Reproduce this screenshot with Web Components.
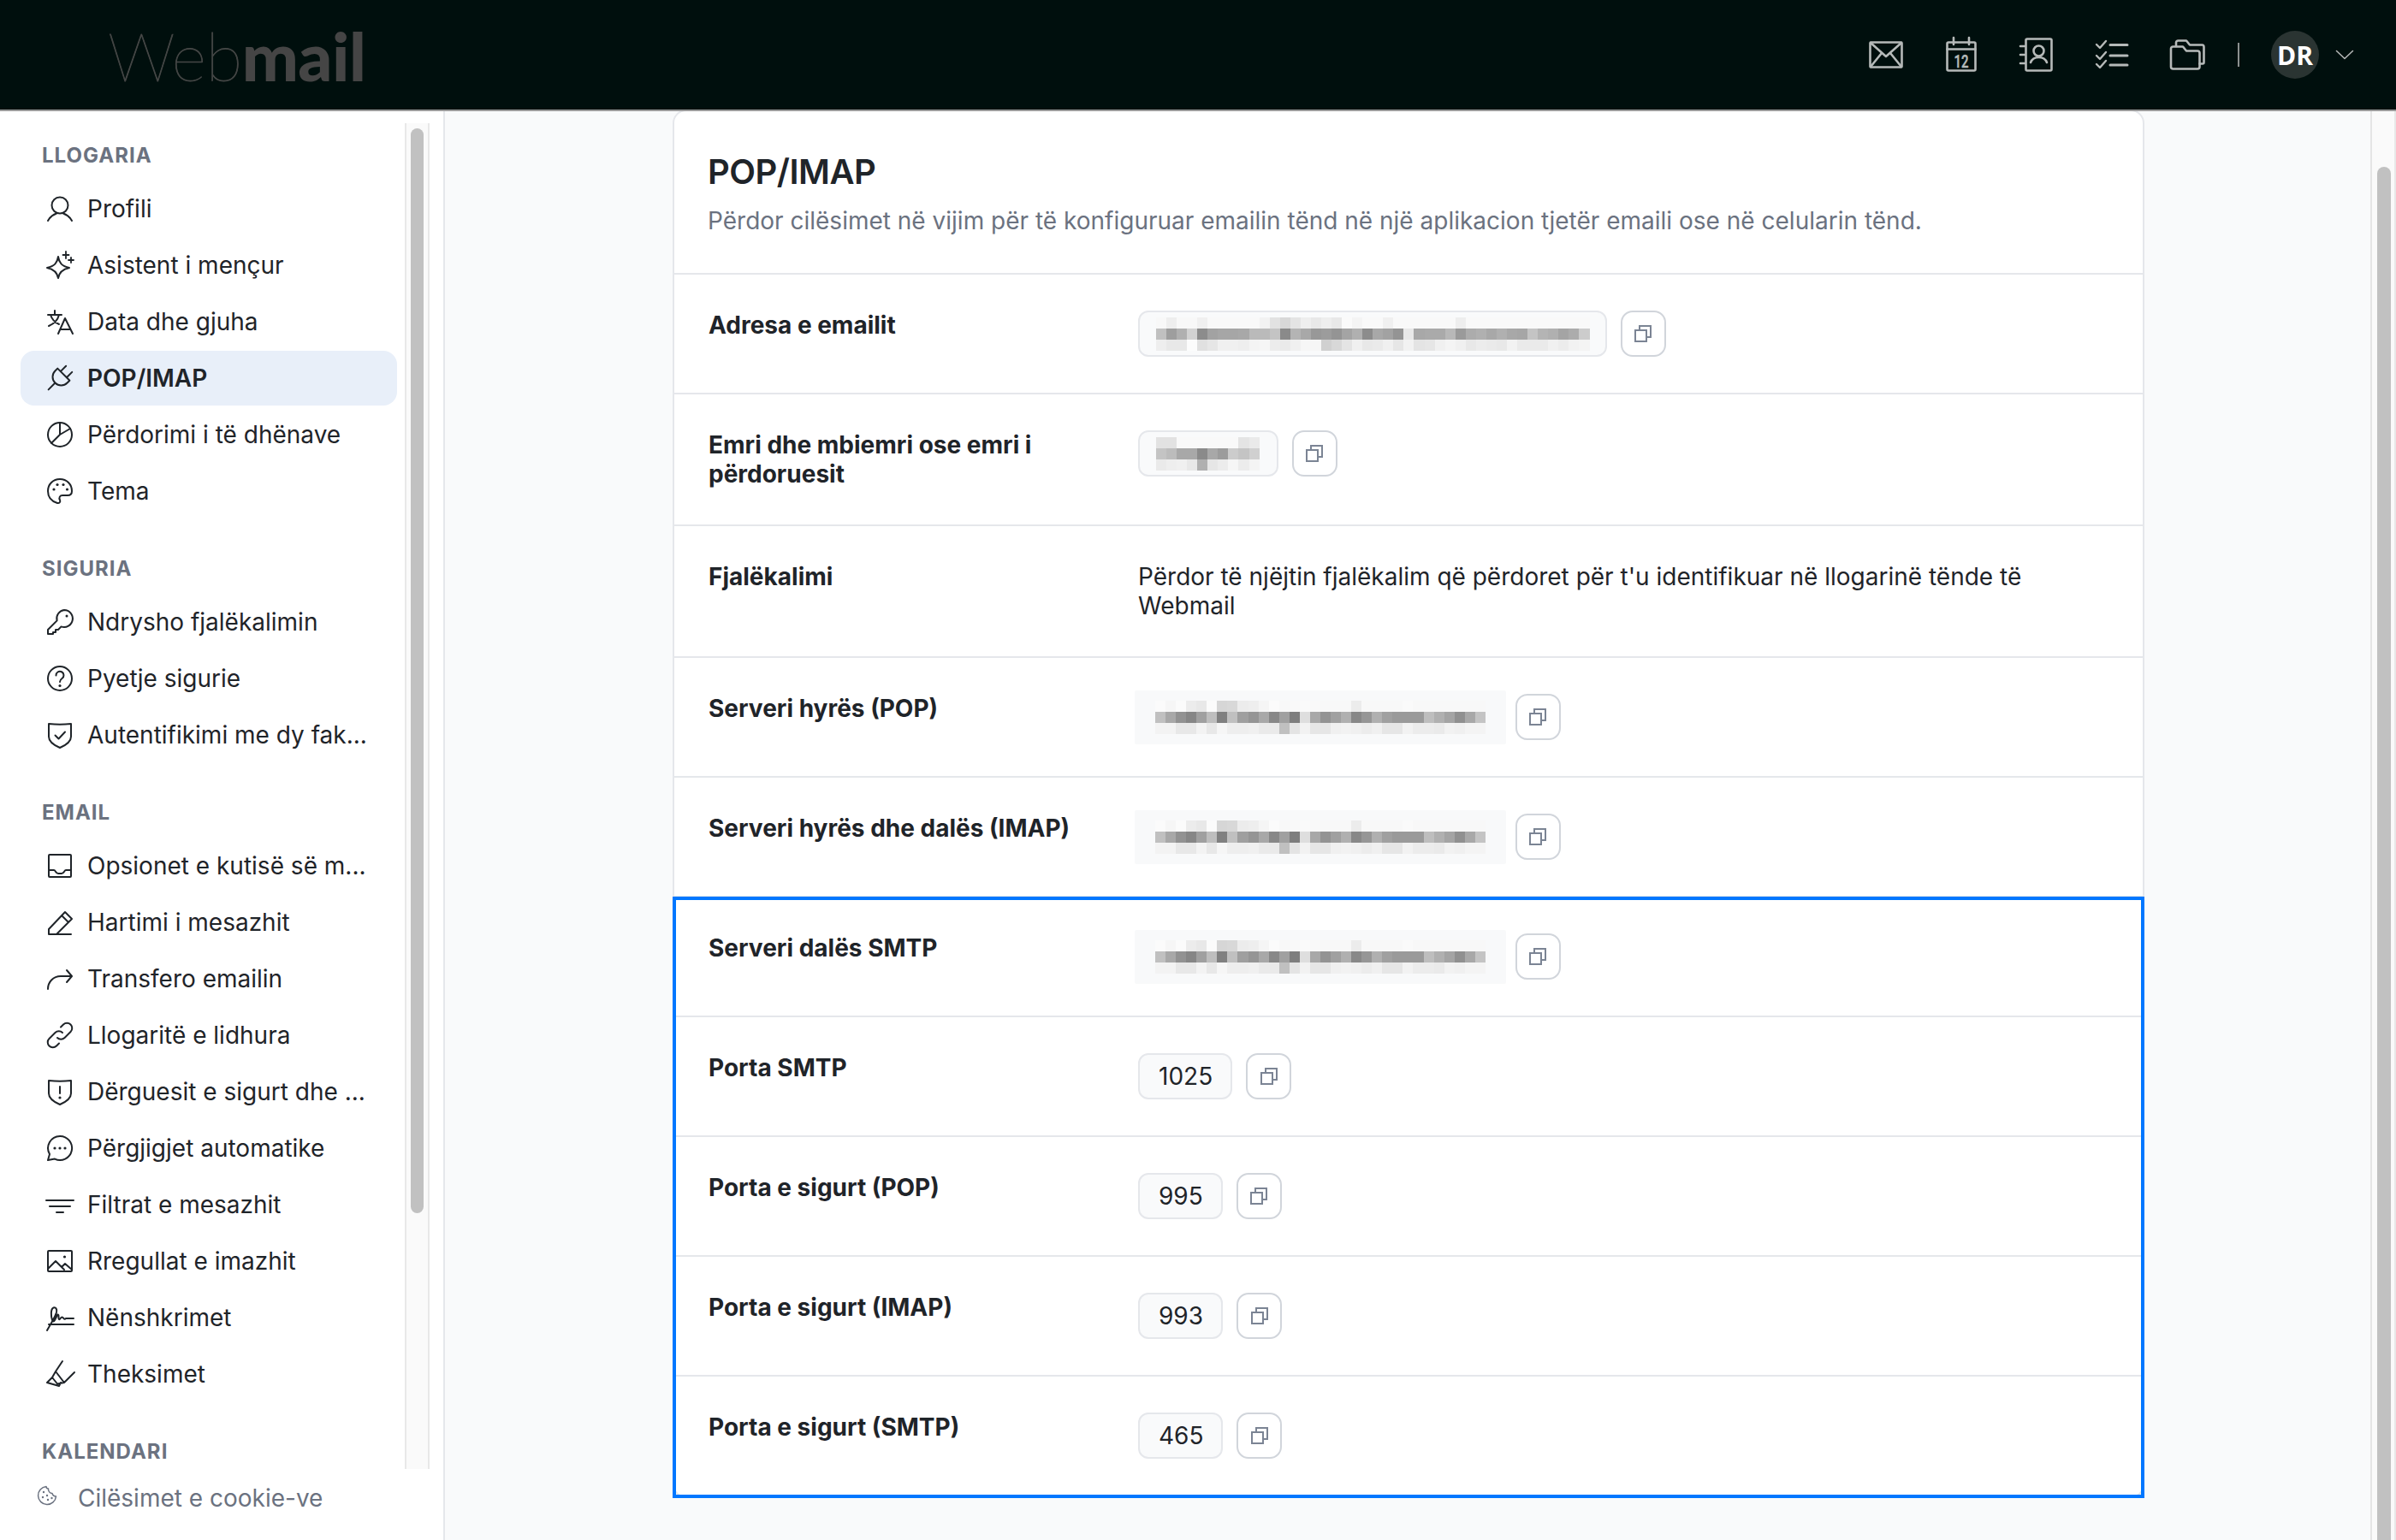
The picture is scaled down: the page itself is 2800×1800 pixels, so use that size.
<!DOCTYPE html>
<html lang="sq">
<head>
<meta charset="utf-8">
<title>Webmail</title>
<style>
  html, body { margin: 0; height: 100%; }
  body {
    width: 2800px;
    height: 1800px;
    overflow: hidden;
    display: flex;
    flex-direction: column;
    font-family: Inter, "Liberation Sans", sans-serif;
    font-size: 28px;
    color: #1f2429;
    background: #f9fafb;
  }
  .page { flex: 1; display: flex; min-height: 0; }
</style>
</head>
<body>
<web-header></web-header>
<div class="page">
  <side-bar>
    <nav-group title="LLOGARIA">
      <nav-item icon="user">Profili</nav-item>
      <nav-item icon="sparkle">Asistent i mençur</nav-item>
      <nav-item icon="translate">Data dhe gjuha</nav-item>
      <nav-item icon="plug" active>POP/IMAP</nav-item>
      <nav-item icon="pie">Përdorimi i të dhënave</nav-item>
      <nav-item icon="palette">Tema</nav-item>
    </nav-group>
    <nav-group title="SIGURIA">
      <nav-item icon="key">Ndrysho fjalëkalimin</nav-item>
      <nav-item icon="question">Pyetje sigurie</nav-item>
      <nav-item icon="shieldcheck">Autentifikimi me dy fak...</nav-item>
    </nav-group>
    <nav-group title="EMAIL">
      <nav-item icon="inbox">Opsionet e kutisë së m...</nav-item>
      <nav-item icon="pencil">Hartimi i mesazhit</nav-item>
      <nav-item icon="forward">Transfero emailin</nav-item>
      <nav-item icon="link">Llogaritë e lidhura</nav-item>
      <nav-item icon="shieldalert">Dërguesit e sigurt dhe ...</nav-item>
      <nav-item icon="chat">Përgjigjet automatike</nav-item>
      <nav-item icon="filter">Filtrat e mesazhit</nav-item>
      <nav-item icon="image">Rregullat e imazhit</nav-item>
      <nav-item icon="signature">Nënshkrimet</nav-item>
      <nav-item icon="highlight">Theksimet</nav-item>
    </nav-group>
    <nav-group title="KALENDARI"></nav-group>
  </side-bar>
  <main-area>
    <settings-card heading="POP/IMAP" description="Përdor cilësimet në vijim për të konfiguruar emailin tënd në një aplikacion tjetër emaili ose në celularin tënd.">
      <setting-row label="Adresa e emailit"><blur-mosaic kind="email"></blur-mosaic><copy-button></copy-button></setting-row>
      <setting-row label="Emri dhe mbiemri ose emri i përdoruesit"><blur-mosaic kind="name"></blur-mosaic><copy-button></copy-button></setting-row>
      <setting-row label="Fjalëkalimi"><span>Përdor të njëjtin fjalëkalim që përdoret për t'u identifikuar në llogarinë tënde të Webmail</span></setting-row>
      <setting-row label="Serveri hyrës (POP)"><blur-mosaic kind="server"></blur-mosaic><copy-button></copy-button></setting-row>
      <setting-row label="Serveri hyrës dhe dalës (IMAP)"><blur-mosaic kind="server"></blur-mosaic><copy-button></copy-button></setting-row>
      <highlight-box>
        <setting-row label="Serveri dalës SMTP"><blur-mosaic kind="server"></blur-mosaic><copy-button></copy-button></setting-row>
        <setting-row label="Porta SMTP"><value-chip>1025</value-chip><copy-button></copy-button></setting-row>
        <setting-row label="Porta e sigurt (POP)"><value-chip>995</value-chip><copy-button></copy-button></setting-row>
        <setting-row label="Porta e sigurt (IMAP)"><value-chip>993</value-chip><copy-button></copy-button></setting-row>
        <setting-row label="Porta e sigurt (SMTP)"><value-chip>465</value-chip><copy-button></copy-button></setting-row>
      </highlight-box>
    </settings-card>
  </main-area>
</div>

<script>
const ICONS = {
  user: '<circle cx="16" cy="12" r="9.5"/><path d="M2 30C4.5 25.5 8.5 22.8 12 21.5M30 30C27.5 25.5 23.5 22.8 20 21.5"/>',
  sparkle: '<path d="M14 6C15 13 18 17 27 19C18 21 15 25 14 31C13 25 10 21 1 19C10 17 13 13 14 6Z"/><path d="M23 0V8M19.5 4H26.5M29 7V13M26 10H32" stroke-width="1.8"/>',
  translate: '<path d="M2 8H18M10 3V8M15 8C13.5 14 9 18.5 3 21M5 8C7 14 10 17 15 19M14 30L22 12L31 30M17 25H28"/>',
  plug: '<g transform="translate(17.5 14.5) rotate(45)"><path d="M-10 -4H10V0A10 10 0 0 1 -10 0ZM-5 -4V-13M5 -4V-13M0 10V21"/></g>',
  pie: '<circle cx="16" cy="16" r="14"/><path d="M16 2V16L28 9M16 16L6 26"/>',
  palette: '<path d="M16 2C8 2 2 8 2 16C2 23 6.500 28 13 30C15.500 30.500 17 28.500 16 26.500C14.500 23.500 16 21 19 21H25C28.500 21 30 19 30 16C30 8 24 2 16 2Z"/><g fill="currentColor" stroke="none"><circle cx="9" cy="14" r="1.600"/><circle cx="13" cy="8.500" r="1.600"/><circle cx="20" cy="8.500" r="1.600"/><circle cx="24.500" cy="14" r="1.600"/></g>',
  key: '<path d="M21 2A10 10 0 1 1 17.500 21.400L14 25H11V28H8V30H2V25L12.600 14.400A10 10 0 0 1 21 2Z"/><circle cx="24" cy="9" r="1.500" fill="currentColor" stroke="none"/>',
  question: '<circle cx="16" cy="16" r="14"/><path d="M11.500 12.500A4.500 4.500 0 1 1 18.500 16C17 17 16 18 16 20"/><circle cx="16" cy="24.500" r="1.600" fill="currentColor" stroke="none"/>',
  shieldcheck: '<path d="M3 3C11 3.800 21 3.800 29 3V18C29 23.500 23 28 16 31C9 28 3 23.500 3 18Z"/><path d="M10.500 16.500L14.500 20.500L22 12.500"/>',
  inbox: '<rect x="3" y="3" width="26" height="26" rx="1"/><path d="M3 21H9C11 21 11 25 14 25H18C21 25 21 21 23 21H29"/>',
  pencil: '<path d="M3 30V24L22 4L30 12L12 30H3ZM18 8L26 16M12 30H29"/>',
  forward: '<path d="M2 28C2 20 8 13 17 13H30M24 6L30 13L24 20"/>',
  link: '<path d="M13 19A6 6 0 0 0 21.500 19L28.500 12A6 6 0 0 0 20 3.500L17 6.500M19 13A6 6 0 0 0 10.500 13L3.500 20A6 6 0 0 0 12 28.500L15 25.500"/>',
  shieldalert: '<path d="M3 3C11 3.800 21 3.800 29 3V18C29 23.500 23 28 16 31C9 28 3 23.500 3 18Z"/><path d="M16 10V18"/><circle cx="16" cy="23" r="1.600" fill="currentColor" stroke="none"/>',
  chat: '<path d="M16 2A14 14 0 1 1 10 28.600L2 30L4 23A14 14 0 0 1 16 2Z"/><g fill="currentColor" stroke="none"><circle cx="10" cy="16" r="1.600"/><circle cx="16" cy="16" r="1.600"/><circle cx="22" cy="16" r="1.600"/></g>',
  filter: '<path d="M0 11H32M4 18H28M12 25H20"/>',
  image: '<rect x="2" y="4" width="28" height="24" rx="1"/><path d="M2 25L11 16L21 26M18 23L22 19L30 26"/><circle cx="21.500" cy="11" r="1.600" fill="currentColor" stroke="none"/>',
  signature: '<path d="M1 31C5 24 10 16 12 10C13 6 11 3.500 8.500 4.500C5 6 5.500 14 7 19C7.500 21 9 21 10 19L13 13C13.500 12 14.500 12.500 14.500 14V17C15 19 16 18 17 16.500C18 15 19 15 20 16.500C21 18 22 18 23 17H32M3 24H32"/>',
  highlight: '<path d="M19 1L11 13L21 26L33 14M11 13L7 20L13 27.500L21 26M7 20L1 26L15 30L17 26"/>',
};

const HEADER_ICONS = {
  mail: '<svg width="40" height="32" viewBox="0 0 40 32"><rect x="1.500" y="1.500" width="37" height="29" rx="1"/><path d="M2 2L20 18L38 2M2 30L15 14M38 30L25 14"/></svg>',
  calendar: '<svg width="36" height="40" viewBox="0 0 36 40"><rect x="1.500" y="5.500" width="33" height="33" rx="1.500"/><path d="M1.500 13.500H34.500M9 0V8M27 0V8"/><text x="18" y="35" text-anchor="middle" font-family="Roboto, sans-serif" font-size="21" font-weight="500" fill="currentColor" stroke="currentColor" stroke-width="0.500" textLength="17" lengthAdjust="spacingAndGlyphs">12</text></svg>',
  contacts: '<svg width="38" height="40" viewBox="0 0 38 40"><rect x="6.500" y="1.500" width="30" height="37" rx="1.500"/><path d="M0 10H5M0 20H5M0 30H5"/><circle cx="21.500" cy="15.500" r="6"/><path d="M12 29C13.500 25 17 23 21.500 23S29.500 25 31 29"/></svg>',
  tasks: '<svg width="36" height="34" viewBox="0 0 36 34"><path d="M0 5L4 9L11 1M0 18L4 22L11 14M0 28L4 32L11 24" stroke-width="2.400"/><path d="M16 5.500H36M16 18H36M16 29H36" stroke-width="3"/></svg>',
  folder: '<svg width="42" height="36" viewBox="0 0 42 36"><path d="M2 11V32C2 33.500 3 34.500 4.500 34.500H33C34.500 34.500 35.500 33.500 35.500 32V16C35.500 14.500 34.500 13.500 33 13.500H20L16 8.500H4.500C3 8.500 2 9.500 2 11Z"/><path d="M8 8V4C8 2.500 9 1.500 10.500 1.500H20L24 6.500H38.500C40 6.500 40.500 7.500 40.500 9V27C40.500 28 40 28.500 39 28.500H35.500"/></svg>',
};

const MOSAICS = {
  email: {
    padRight: 18,
    rows: [
      'f8 ee f8 f8 f0 f9 f9 f9 f9 f9 f2 e2 d8 e4 ee e8 ee e8 fa f4 f9 f9 f0 f9 f9 f9 f9 f9 f9 ee f9 f9 f9 f9 f9 f9 f9 f9 f9 f9 f9 f9',
      'c0 9e b0 d2 8c a2 a6 a6 a8 ba ba c4 8a b4 a8 98 9c 94 a4 b0 8c a8 a2 94 e8 a8 aa aa b8 9a ac b0 a8 b0 a8 a6 c4 b4 b0 a4 ac cc',
      'ee e8 e8 fc e0 e6 f0 f0 ee f4 f6 ec ea f0 f6 f6 d0 d8 e4 f0 e8 ea f0 e6 f2 e4 e6 f0 f4 f0 e8 ec ea e8 f2 ea ea ea f0 ec f2 f4',
    ],
  },
  name: {
    padRight: 20,
    rows: [
      'e2 e2 f9 f9 f9 f9 f9 f9 e4 ea',
      'c4 bc a8 a8 8a a8 9c cc c4 d0',
      'ea ee f0 e8 b0 e6 ec f6 ec f4',
    ],
  },
  server: {
    bare: true,
    rows: [
      'fb f6 fb ec e8 fb d6 d8 ec ee f5 fb f8 f9 fa f9 f8 f8 f8 ec f8 f8 f8 f8 fa f8 f8 f8 f8 f8 f8 f8',
      'c0 a8 92 86 a0 be 80 c0 9f 95 a8 88 a0 7e de a8 93 a0 b0 88 96 b0 a0 9a 9a 9a be b0 a4 90 a8 c4',
      'f3 f3 e8 e8 f3 e8 f6 ee ee f0 ea ea c0 e4 f2 e6 e6 f0 f2 f0 ec f0 e6 e6 f2 ec ec ea f2 f0 f4 f4',
    ],
  },
};

class SvgIcon extends HTMLElement {
  constructor() {
    super();
    const shadowRoot = this.attachShadow({ mode: 'open' });
    const size = this.getAttribute('size') || 32;
    shadowRoot.innerHTML = `
      <style>
        :host { display: block; width: ${size}px; height: ${size}px; flex: none; }
        svg { display: block; overflow: visible; fill: none; stroke: currentColor; stroke-width: 2; stroke-linecap: round; stroke-linejoin: round; }
      </style>
      <svg width="${size}" height="${size}" viewBox="0 0 32 32">${ICONS[this.getAttribute('name')] || ''}</svg>`;
  }
}
customElements.define('svg-icon', SvgIcon);

class WebHeader extends HTMLElement {
  constructor() {
    super();
    const shadowRoot = this.attachShadow({ mode: 'open' });
    const icons = Object.values(HEADER_ICONS).map(svg => `<div class="slot">${svg}</div>`).join('');
    shadowRoot.innerHTML = `
      <style>
        :host {
          display: flex;
          flex: none;
          align-items: center;
          justify-content: space-between;
          box-sizing: border-box;
          height: 130px;
          border-bottom: 2px solid #999;
          background: #000f0d;
          padding: 0 50px 0 126px;
        }
        .logo { font-family: Lato, sans-serif; font-size: 78.5px; line-height: 1; color: #454746; letter-spacing: -0.5px; margin-top: 2px; }
        .logo .thin { font-weight: 100; -webkit-text-stroke: 0.8px #454746; }
        .logo b { font-weight: 900; color: #454545; }
        .right { display: flex; align-items: center; color: #b6bab9; }
        .slot { width: 88px; display: flex; justify-content: center; }
        svg { display: block; overflow: visible; fill: none; stroke: currentColor; stroke-width: 2.6; stroke-linecap: round; stroke-linejoin: round; }
        .sep { width: 2px; height: 28px; background: #8b908f; margin: 0 37px 0 15px; }
        .avatar {
          width: 56px; height: 56px; border-radius: 50%;
          background: #2a3432; color: #fff;
          display: flex; align-items: center; justify-content: center;
          font: 700 30px "Open Sans", sans-serif;
          margin-right: 20px;
        }
      </style>
      <div class="logo"><span class="thin">Web</span><b>mail</b></div>
      <div class="right">
        ${icons}
        <div class="sep"></div>
        <div class="avatar">DR</div>
        <svg width="20" height="10" viewBox="0 0 20 10" style="stroke-width:1.500"><path d="M0.500 0.500L10 9.500L19.500 0.500"/></svg>
      </div>`;
  }
}
customElements.define('web-header', WebHeader);

const sideBarTemplate = document.createElement('template');
sideBarTemplate.innerHTML = `
  <style>
    :host {
      display: flex;
      flex-direction: column;
      flex: none;
      box-sizing: border-box;
      width: 520px;
      border-right: 2px solid #e5e7eb;
      background: #fff;
    }
    .top { flex: 1; display: flex; min-height: 0; }
    nav {
      width: 473px;
      box-sizing: border-box;
      padding: 35px 9px 0 24px;
      overflow: hidden;
      display: flex;
      flex-direction: column;
      gap: 42px;
    }
    .track {
      flex: none;
      box-sizing: border-box;
      width: 29px;
      margin-top: 14px;
      border-left: 2px solid #e8e8e8;
      border-right: 2px solid #e8e8e8;
      background: #fafafa;
      padding: 6px 5px 0;
    }
    .thumb { height: 1268px; border-radius: 8px; background: #c1c1c1; }
    footer {
      flex: none;
      height: 83px;
      box-sizing: border-box;
      padding: 17px 0 0 43px;
      display: flex;
      gap: 24px;
      color: #6b7280;
      line-height: 34px;
    }
    footer svg { margin-top: 2px; fill: none; stroke: currentColor; stroke-width: 1.500; stroke-linecap: round; stroke-linejoin: round; }
  </style>
  <div class="top">
    <nav><slot></slot></nav>
    <div class="track"><div class="thumb"></div></div>
  </div>
  <footer>
    <svg width="24" height="24" viewBox="0 0 24 24"><path d="M11 1.500A10.500 10.500 0 1 0 22.500 13C20 13 18.500 11.500 18 9.500C15.500 9.500 13 7 13.500 4C12 4 11 3 11 1.500Z"/><g fill="currentColor" stroke="none"><circle cx="8" cy="8" r="1.200"/><circle cx="7" cy="14" r="1.200"/><circle cx="12" cy="12" r="1.200"/><circle cx="13" cy="17" r="1.200"/><circle cx="17.500" cy="15" r="1.200"/></g></svg>
    <span>Cilësimet e cookie-ve</span>
  </footer>`;

class SideBar extends HTMLElement {
  constructor() {
    super();
    const shadowRoot = this.attachShadow({ mode: 'open' });
    shadowRoot.appendChild(sideBarTemplate.content.cloneNode(true));
  }
}
customElements.define('side-bar', SideBar);

class NavGroup extends HTMLElement {
  constructor() {
    super();
    const shadowRoot = this.attachShadow({ mode: 'open' });
    shadowRoot.innerHTML = `
      <style>
        :host { display: flex; flex-direction: column; gap: 2px; flex: none; }
        h3 { margin: 0 0 11px 25px; font-size: 24px; line-height: 34px; font-weight: 700; letter-spacing: 1px; color: #6b7280; }
      </style>
      <h3>${this.getAttribute('title')}</h3>
      <slot></slot>`;
  }
}
customElements.define('nav-group', NavGroup);

class NavItem extends HTMLElement {
  constructor() {
    super();
    const shadowRoot = this.attachShadow({ mode: 'open' });
    shadowRoot.innerHTML = `
      <style>
        :host {
          display: flex;
          align-items: center;
          gap: 16px;
          height: 64px;
          padding-left: 30px;
          border-radius: 16px;
          white-space: nowrap;
        }
        :host([active]) { background: #e8eff9; font-weight: 600; }
      </style>
      <svg-icon name="${this.getAttribute('icon')}"></svg-icon>
      <span><slot></slot></span>`;
  }
}
customElements.define('nav-item', NavItem);

class MainArea extends HTMLElement {
  constructor() {
    super();
    const shadowRoot = this.attachShadow({ mode: 'open' });
    shadowRoot.innerHTML = `
      <style>
        :host { display: flex; flex: 1; min-width: 0; }
        .content { flex: 1; overflow: hidden; display: flex; justify-content: center; align-items: flex-start; padding-left: 2px; }
        .track { flex: none; width: 30px; box-sizing: border-box; border-left: 2px solid #e5e5e5; border-right: 2px solid #e8e8e8; background: #fafafa; padding: 65px 4px 0 6px; overflow: hidden; }
        .thumb { height: 1700px; border-radius: 8px; background: #c1c1c1; }
      </style>
      <div class="content"><slot></slot></div>
      <div class="track"><div class="thumb"></div></div>`;
  }
}
customElements.define('main-area', MainArea);

class SettingsCard extends HTMLElement {
  constructor() {
    super();
    const shadowRoot = this.attachShadow({ mode: 'open' });
    shadowRoot.innerHTML = `
      <style>
        :host {
          display: block;
          flex: none;
          box-sizing: border-box;
          width: 1720px;
          margin-top: -2px;
          border: 2px solid #e5e7eb;
          border-radius: 16px;
          background: #fff;
        }
        header { padding: 47px 40px 44px 39px; }
        h1 { margin: 0 0 16px; font-size: 40px; line-height: 48px; font-weight: 600; letter-spacing: -0.5px; }
        p { margin: 0; line-height: 34px; color: #6b7280; }
      </style>
      <header>
        <h1>${this.getAttribute('heading')}</h1>
        <p>${this.getAttribute('description')}</p>
      </header>
      <slot></slot>`;
  }
}
customElements.define('settings-card', SettingsCard);

class HighlightBox extends HTMLElement {
  constructor() {
    super();
    const shadowRoot = this.attachShadow({ mode: 'open' });
    shadowRoot.innerHTML = `
      <style>
        :host { display: block; position: relative; margin: 0 -2px -2px; padding: 0 2px 4px; }
        :host::after {
          content: '';
          position: absolute;
          inset: 1px 0 0;
          border: 4px solid #0077ff;
          pointer-events: none;
        }
      </style>
      <slot></slot>`;
  }
}
customElements.define('highlight-box', HighlightBox);

class SettingRow extends HTMLElement {
  constructor() {
    super();
    const shadowRoot = this.attachShadow({ mode: 'open' });
    shadowRoot.innerHTML = `
      <style>
        :host {
          display: grid;
          grid-template-columns: 502px 1fr;
          padding: 42px 40px;
          border-top: 2px solid #e5e7eb;
          line-height: 34px;
        }
        .label { font-weight: 700; padding-right: 30px; }
        .value { display: flex; align-items: flex-start; gap: 16px; min-height: 54px; }
      </style>
      <div class="label">${this.getAttribute('label')}</div>
      <div class="value"><slot></slot></div>`;
  }
}
customElements.define('setting-row', SettingRow);

class ValueChip extends HTMLElement {
  constructor() {
    super();
    const shadowRoot = this.attachShadow({ mode: 'open' });
    shadowRoot.innerHTML = `
      <style>
        :host {
          display: flex;
          align-items: center;
          box-sizing: border-box;
          height: 54px;
          padding: 0 21px 0 22px;
          border: 2px solid #e5e7eb;
          border-radius: 12px;
          background: #f9fafb;
        }
      </style>
      <slot></slot>`;
  }
}
customElements.define('value-chip', ValueChip);

class BlurMosaic extends HTMLElement {
  constructor() {
    super();
    const shadowRoot = this.attachShadow({ mode: 'open' });
    const data = MOSAICS[this.getAttribute('kind')];
    const rows = data.rows.map(row => row.split(' '));
    const cols = rows[0].length;
    const offsetX = data.bare ? 24 : 0;
    const offsetY = data.bare ? 12 : 0;
    let rects = '';
    rows.forEach((row, y) => {
      row.forEach((shade, x) => {
        rects += `<rect x="${offsetX + x * 12.06}" y="${offsetY + y * 13}" width="12.06" height="13" fill="#${shade}${shade}${shade}"/>`;
      });
    });
    const width = cols * 12.06 + offsetX * 2;
    const height = 39 + offsetY * 2;
    const bare = `
      :host { display: block; flex: none; width: ${width}px; height: ${height}px; margin: -4px -5px -5px -4px; background: #f8f9fa; border-radius: 2px; }
      svg { display: block; }`;
    const boxed = `
      :host {
        display: flex; flex: none; align-items: center;
        box-sizing: border-box; height: 54px; padding: 0 ${data.padRight}px 0 19px;
        border: 2px solid #e5e7eb; border-radius: 12px; background: #f9fafb;
      }
      svg { display: block; }`;
    shadowRoot.innerHTML = `
      <style>${data.bare ? bare : boxed}</style>
      <svg width="${width}" height="${height}" viewBox="0 0 ${width} ${height}" shape-rendering="crispEdges">${rects}</svg>`;
  }
}
customElements.define('blur-mosaic', BlurMosaic);

class CopyButton extends HTMLElement {
  constructor() {
    super();
    const shadowRoot = this.attachShadow({ mode: 'open' });
    shadowRoot.innerHTML = `
      <style>
        :host {
          display: flex;
          flex: none;
          align-items: center;
          justify-content: center;
          box-sizing: border-box;
          width: 53px;
          height: 54px;
          border: 2px solid #d1d5db;
          border-radius: 14px;
          background: #fff;
          color: #7b8494;
        }
        svg { display: block; fill: none; stroke: currentColor; stroke-width: 2; }
      </style>
      <svg width="20" height="20" viewBox="0 0 20 20"><rect x="1" y="6" width="13" height="13"/><path d="M6 6V1H19V14H14"/></svg>`;
  }
}
customElements.define('copy-button', CopyButton);
</script>
</body>
</html>
